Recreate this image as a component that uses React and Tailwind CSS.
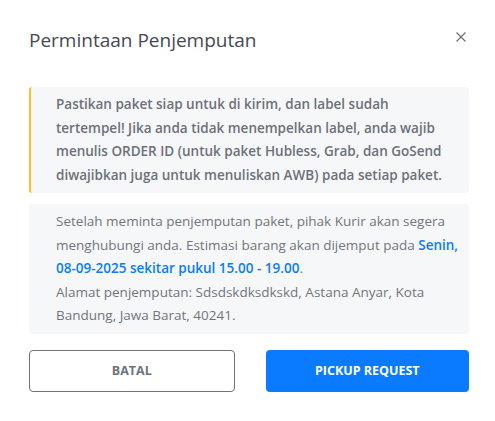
export default function App() {
  return (
    <div className="w-[495px] h-[421px] bg-white" style={{ fontFamily: '"Open Sans", "Noto Sans", sans-serif' }}>
      <div className="flex items-center justify-between pl-[29px] pr-[28px] pt-[26px]">
        <h1 className="text-[19px] leading-[28px] text-[#454a50] font-normal">Permintaan Penjemputan</h1>
        <svg width="12" height="12" viewBox="0 0 12 12" className="mb-[6px]">
          <path d="M1.5 1.5 L10.5 10.5 M10.5 1.5 L1.5 10.5" stroke="#6b6f75" strokeWidth="1.2" />
        </svg>
      </div>
      <div className="ml-[29px] mr-[26px] mt-[33px] flex flex-col gap-[11px]">
        <div className="bg-[#f6f7f9] border-l-2 border-[#f8c12c] rounded-[3px] pl-[25px] pr-[4px] py-[6px] text-[13.5px] leading-[23.5px] font-semibold text-[#6c7179] whitespace-nowrap">
          Pastikan paket siap untuk di kirim, dan label sudah
          <br />
          tertempel! Jika anda tidak menempelkan label, anda wajib
          <br />
          menulis ORDER ID (untuk paket Hubless, Grab, dan GoSend
          <br />
          diwajibkan juga untuk menuliskan AWB) pada setiap paket.
        </div>
        <div className="bg-[#f6f7f9] rounded-[3px] pl-[27px] pr-[4px] py-[6px] text-[13.5px] leading-[23.6px] text-[#71767d] whitespace-nowrap">
          Setelah meminta penjemputan paket, pihak Kurir akan segera
          <br />
          menghubungi anda. Estimasi barang akan dijemput pada{' '}
          <span className="font-semibold text-[#0a7cfb]">Senin,</span>
          <br />
          <span className="font-semibold text-[#0a7cfb]">08-09-2025 sekitar pukul 15.00 - 19.00</span>.
          <br />
          Alamat penjemputan: Sdsdskdksdkskd, Astana Anyar, Kota
          <br />
          Bandung, Jawa Barat, 40241.
        </div>
      </div>
      <div className="ml-[29px] mr-[26px] mt-[16px] flex gap-[31px]">
        <button className="flex-1 h-[42px] rounded-[4px] border border-[#6c737a] bg-white text-[12.5px] font-bold text-[#6c737a]">BATAL</button>
        <button className="flex-1 h-[42px] rounded-[4px] bg-[#0a7bff] text-[12.5px] font-bold text-white">PICKUP REQUEST</button>
      </div>
    </div>
  );
}
